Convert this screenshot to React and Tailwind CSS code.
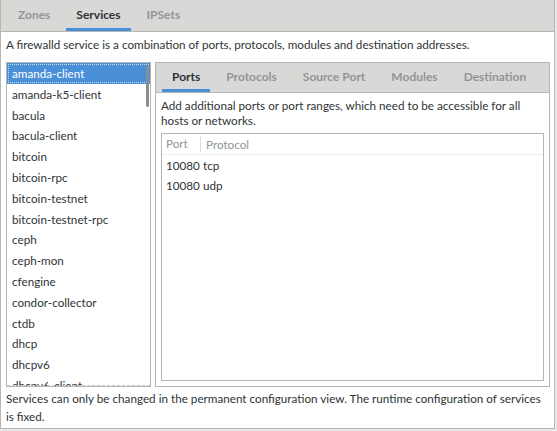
import { useState } from 'react'

const services = [
  'amanda-client',
  'amanda-k5-client',
  'bacula',
  'bacula-client',
  'bitcoin',
  'bitcoin-rpc',
  'bitcoin-testnet',
  'bitcoin-testnet-rpc',
  'ceph',
  'ceph-mon',
  'cfengine',
  'condor-collector',
  'ctdb',
  'dhcp',
  'dhcpv6',
  'dhcpv6-client',
]

const topTabs = ['Zones', 'Services', 'IPSets']
const subTabs = ['Ports', 'Protocols', 'Source Port', 'Modules', 'Destination']

const ports = [
  { port: '10080', proto: 'tcp' },
  { port: '10080', proto: 'udp' },
]

const font = { fontFamily: 'Lato, "Liberation Sans", sans-serif' }

export default function App() {
  const [selected, setSelected] = useState('amanda-client')

  return (
    <div
      className="w-[557px] h-[431px] bg-[#e8e8e7] text-[11.7px] text-[#2e3436] overflow-hidden"
      style={font}
    >
      <div className="w-[555px] h-[429px] flex flex-col border-l border-r border-b border-[#b6b6b3] bg-white">

        {/* ── Top tabs ─────────────────────────────────────────── */}
        <div className="h-[32px] shrink-0 flex items-stretch gap-[6px] pl-[7px] bg-[#d8d8d7] border-b border-[#b6b6b3] text-[12px] font-bold">
          {topTabs.map((t) => (
            <div
              key={t}
              className={`px-[10px] flex items-center border-b-[3px] ${
                t === 'Services'
                  ? 'border-[#4a90d9] text-[#2e3436]'
                  : 'border-transparent text-[#929595]'
              }`}
            >
              <span className="mt-[2px]">{t}</span>
            </div>
          ))}
        </div>

        {/* ── Body ─────────────────────────────────────────────── */}
        <div className="flex-1 flex flex-col pl-[5px] pr-[4px] min-h-0">
          <p className="h-[30px] leading-[24px] shrink-0">
            A firewalld service is a combination of ports, protocols, modules and destination addresses.
          </p>

          <div className="flex gap-[4px] h-[325px] shrink-0">

            {/* service list */}
            <div className="w-[145px] shrink-0 border border-[#b6b6b3] relative overflow-hidden">
              {services.map((s) => (
                <div
                  key={s}
                  onClick={() => setSelected(s)}
                  className={`h-[20.8px] leading-[20.8px] px-[5px] whitespace-nowrap ${
                    s === selected
                      ? 'bg-[#4a90d9] text-white outline outline-1 outline-dotted outline-[#c5dcf3] -outline-offset-2'
                      : ''
                  }`}
                >
                  {s}
                </div>
              ))}
              <div className="absolute right-[1px] top-[2px] w-[3px] h-[42px] rounded-full bg-[#8b8e8f]" />
              <div className="absolute left-0 right-0 bottom-0 border-b border-dashed border-[#c8c8c8]" />
            </div>

            {/* detail panel */}
            <div className="flex-1 flex flex-col border border-[#b6b6b3]">
              <div className="h-[30px] shrink-0 flex items-stretch gap-[6px] pl-[6px] bg-[#d8d8d7] border-b border-[#b6b6b3] text-[12px] font-bold">
                {subTabs.map((t) => (
                  <div
                    key={t}
                    className={`px-[10px] flex items-center border-b-[3px] ${
                      t === 'Ports'
                        ? 'border-[#4a90d9] text-[#2e3436]'
                        : 'border-transparent text-[#929595]'
                    }`}
                  >
                    <span className="mt-[2px]">{t}</span>
                  </div>
                ))}
              </div>

              <div className="flex-1 flex flex-col px-[5px] pb-[5px] min-h-0">
                <p className="leading-[15px] pt-[5px] pb-[5px]">
                  Add additional ports or port ranges, which need to be accessible for all
                  <br />
                  hosts or networks.
                </p>

                <div className="flex-1 border border-[#b6b6b3]">
                  <div className="h-[21px] flex items-center text-[#929595] border-b border-[#ececec]">
                    <div className="w-[38px] pl-[4px]">Port</div>
                    <div className="h-[16px] leading-[16px] border-l border-[#dcdcdc] pl-[5px]">Protocol</div>
                  </div>
                  {ports.map((p) => (
                    <div key={p.proto} className="h-[20px] leading-[20px] flex pl-[4px]">
                      <span className="w-[37px]">{p.port}</span>
                      <span>{p.proto}</span>
                    </div>
                  ))}
                </div>
              </div>
            </div>
          </div>

          <p className="leading-[18px] pt-[2px]">
            Services can only be changed in the permanent configuration view. The runtime configuration of services
            <br />
            is fixed.
          </p>
        </div>
      </div>
    </div>
  )
}
